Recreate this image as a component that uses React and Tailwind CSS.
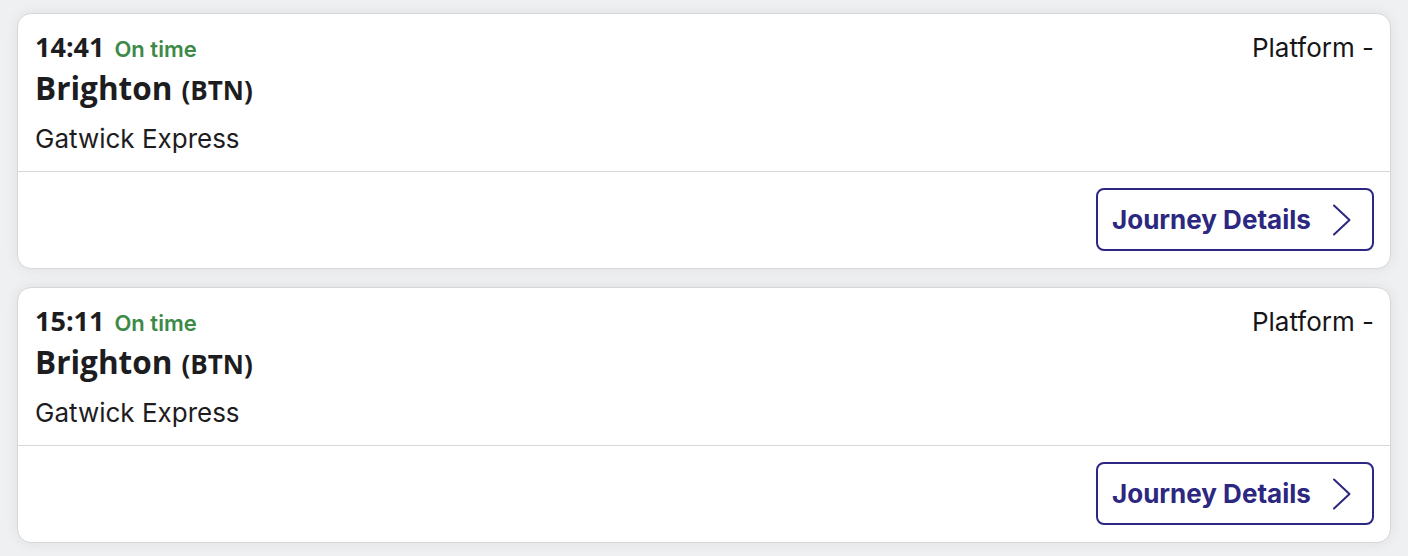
const services = [
    { id: 1, time: "14:41", status: "On time", destination: "Brighton", crs: "BTN", operator: "Gatwick Express", platform: "-" },
    { id: 2, time: "15:11", status: "On time", destination: "Brighton", crs: "BTN", operator: "Gatwick Express", platform: "-" },
];

function Chevron() {
    return (
        <svg width="20" height="32" viewBox="0 0 20 32" fill="none" className="shrink-0">
            <polyline points="2,1.5 17.5,16 2,30.5" stroke="#2c2780" strokeWidth="2" strokeLinecap="round" strokeLinejoin="round" />
        </svg>
    );
}

function ServiceCard({ service }) {
    return (
        <div className="bg-white border border-[#d7d7db] rounded-[14px] shadow-[0_0_14px_rgba(0,0,0,0.07)] overflow-hidden">
            {/* Service info */}
            <div className="pl-[17px] pr-[16px] pt-[16px] pb-[12px] text-[#1d1d1f]">
                <div className="flex items-baseline justify-between">
                    <div className="flex items-baseline gap-[10px]">
                        <span className="font-['Open_Sans',sans-serif] font-bold text-[27px] leading-[34px]">
                            {service.time}
                        </span>
                        <span className="font-['Inter',sans-serif] font-semibold text-[22px] leading-[34px] text-[#3c8a46]">
                            {service.status}
                        </span>
                    </div>
                    <span className="font-['Inter',sans-serif] text-[26px] leading-[34px] text-[#161618]">
                        Platform {service.platform}
                    </span>
                </div>
                <div className="flex items-baseline gap-[9px] font-['Open_Sans',sans-serif] font-bold leading-[44px]">
                    <span className="text-[31.5px]">{service.destination}</span>
                    <span className="text-[26px]">({service.crs})</span>
                </div>
                <div className="mt-[7px] font-['Inter',sans-serif] text-[26px] leading-[40px]">
                    {service.operator}
                </div>
            </div>

            {/* Actions */}
            <div className="border-t border-[#d7d7db] flex justify-end pl-[17px] pr-[16px] pt-[16px] pb-[17px]">
                <button className="h-[63px] w-[278px] flex items-center justify-between pl-[14px] pr-[20px] border-2 border-[#2c2780] rounded-[8px] bg-white">
                    <span className="font-['Inter',sans-serif] font-bold text-[26px] text-[#2c2780]">
                        Journey Details
                    </span>
                    <Chevron />
                </button>
            </div>
        </div>
    );
}

export default function App() {
    return (
        <div className="min-h-screen bg-[#eff0f2] px-[17px] pt-[13px] pb-[14px] flex flex-col gap-[18px]">
            {services.map((service) => (
                <ServiceCard key={service.id} service={service} />
            ))}
        </div>
    );
}
